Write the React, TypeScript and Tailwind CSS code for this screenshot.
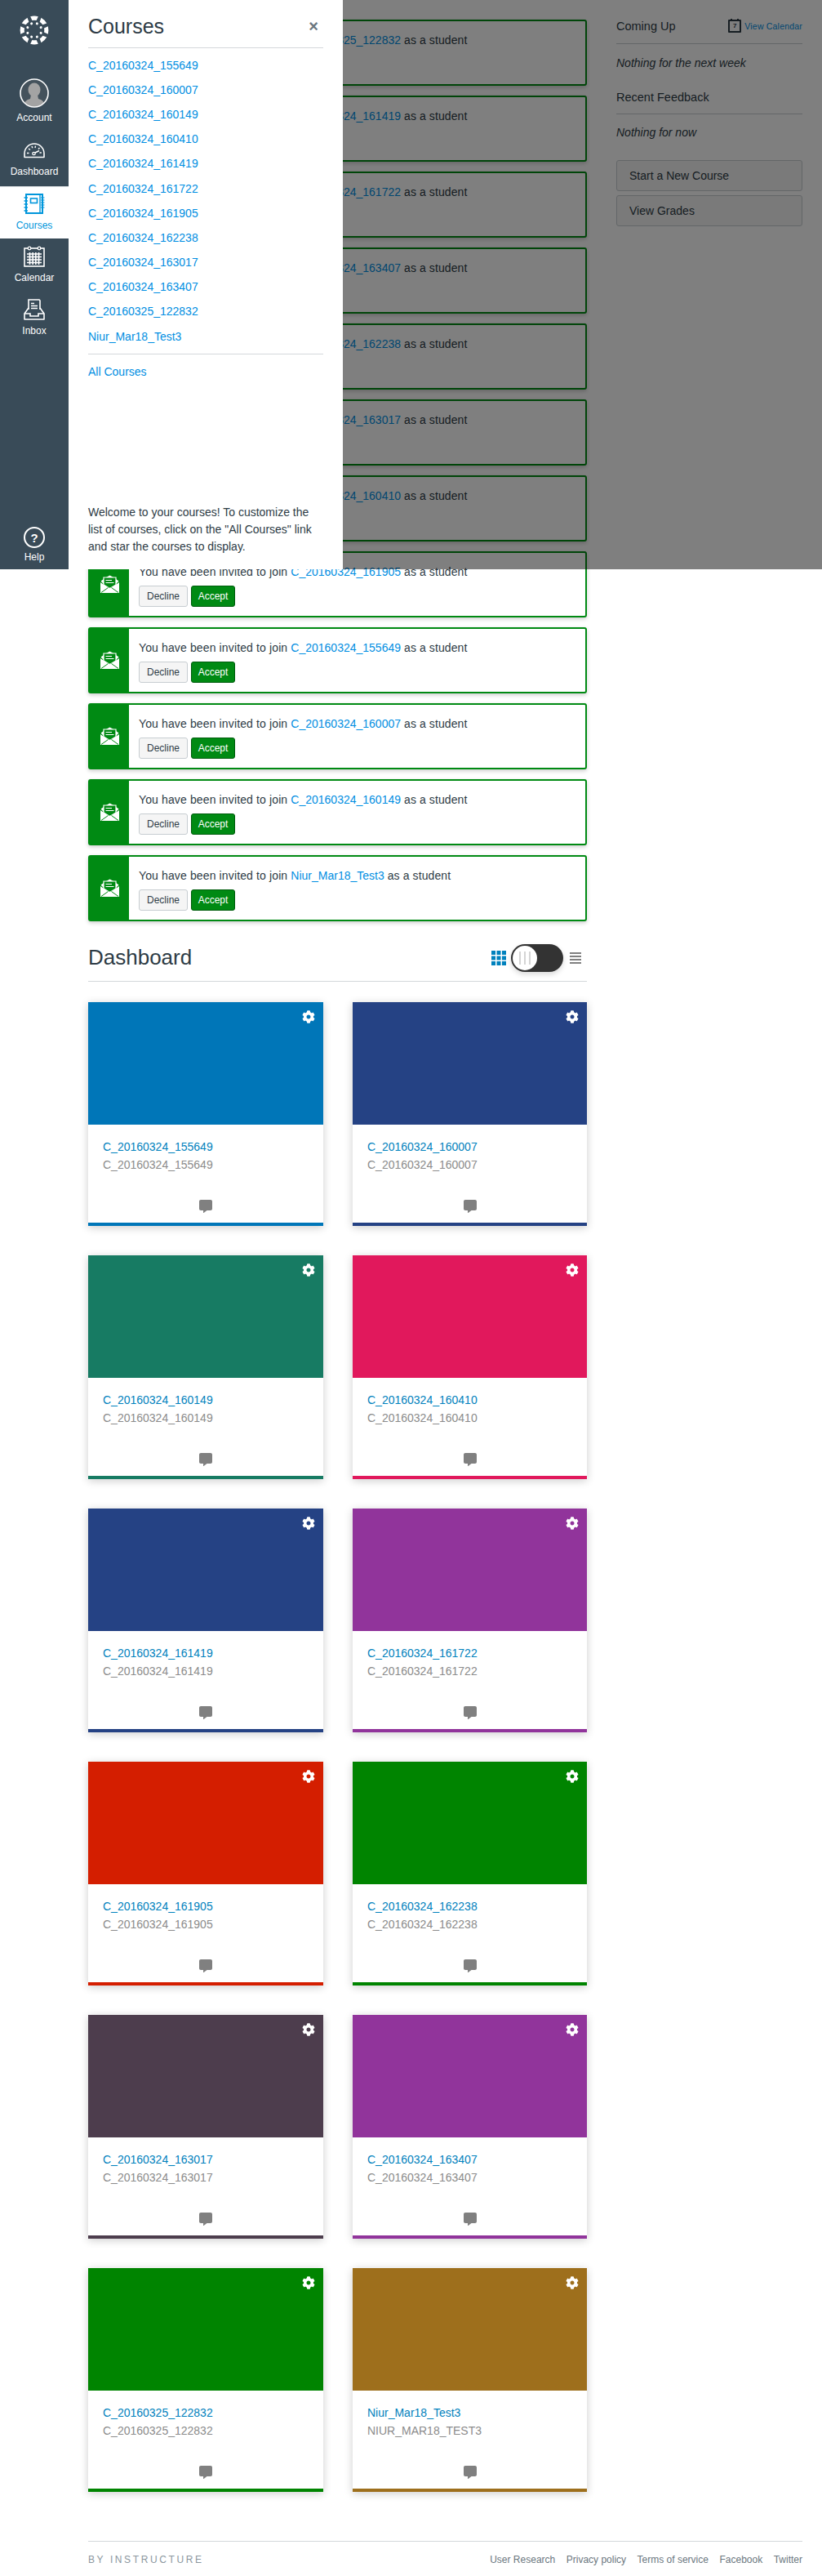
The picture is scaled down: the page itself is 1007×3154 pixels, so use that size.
import React from "react";
import { FaCog, FaCommentAlt } from "react-icons/fa";

const INVITES = [
  "C_20160325_122832", "C_20160324_161419", "C_20160324_161722", "C_20160324_163407",
  "C_20160324_162238", "C_20160324_163017", "C_20160324_160410", "C_20160324_161905",
  "C_20160324_155649", "C_20160324_160007", "C_20160324_160149", "Niur_Mar18_Test3",
];

const TRAY = [
  "C_20160324_155649", "C_20160324_160007", "C_20160324_160149", "C_20160324_160410",
  "C_20160324_161419", "C_20160324_161722", "C_20160324_161905", "C_20160324_162238",
  "C_20160324_163017", "C_20160324_163407", "C_20160325_122832", "Niur_Mar18_Test3",
];

const CARDS: { title: string; sub: string; hero: string; line: string }[] = [
  { title: "C_20160324_155649", sub: "C_20160324_155649", hero: "bg-[#0076b8]", line: "bg-[#0076b8]" },
  { title: "C_20160324_160007", sub: "C_20160324_160007", hero: "bg-[#254284]", line: "bg-[#254284]" },
  { title: "C_20160324_160149", sub: "C_20160324_160149", hero: "bg-[#177b63]", line: "bg-[#177b63]" },
  { title: "C_20160324_160410", sub: "C_20160324_160410", hero: "bg-[#e1185c]", line: "bg-[#e1185c]" },
  { title: "C_20160324_161419", sub: "C_20160324_161419", hero: "bg-[#254284]", line: "bg-[#254284]" },
  { title: "C_20160324_161722", sub: "C_20160324_161722", hero: "bg-[#91349b]", line: "bg-[#91349b]" },
  { title: "C_20160324_161905", sub: "C_20160324_161905", hero: "bg-[#d41e00]", line: "bg-[#d41e00]" },
  { title: "C_20160324_162238", sub: "C_20160324_162238", hero: "bg-[#008400]", line: "bg-[#008400]" },
  { title: "C_20160324_163017", sub: "C_20160324_163017", hero: "bg-[#4d3d4d]", line: "bg-[#4d3d4d]" },
  { title: "C_20160324_163407", sub: "C_20160324_163407", hero: "bg-[#91349b]", line: "bg-[#91349b]" },
  { title: "C_20160325_122832", sub: "C_20160325_122832", hero: "bg-[#008400]", line: "bg-[#008400]" },
  { title: "Niur_Mar18_Test3", sub: "NIUR_MAR18_TEST3", hero: "bg-[#9e6f1c]", line: "bg-[#9e6f1c]" },
];

function Logo() {
  const wedges = [0, 45, 90, 135, 180, 225, 270, 315];
  return (
    <svg width="36" height="36" viewBox="0 0 36 36" fill="#fff">
      {wedges.map((a) => (
        <g key={a} transform={`rotate(${a} 18 18)`}>
          <path d="M13.2 1.2 Q18 0 22.8 1.2 L20.6 6 Q18 5.4 15.4 6 Z" />
          <circle cx="18" cy="9.2" r="1.5" transform="rotate(22.5 18 18)" />
        </g>
      ))}
    </svg>
  );
}

function Avatar() {
  return (
    <svg width="36" height="36" viewBox="0 0 36 36">
      <defs>
        <clipPath id="avatar-clip">
          <circle cx="18" cy="18" r="16.5" />
        </clipPath>
      </defs>
      <circle cx="18" cy="18" r="16.5" fill="#44525c" />
      <g clipPath="url(#avatar-clip)" fill="#a3a3a3">
        <ellipse cx="18" cy="14" rx="7.5" ry="8.5" />
        <path d="M14 20 L22 20 L23 25 Q31 27 33 36 L3 36 Q5 27 13 25 Z" />
      </g>
      <circle cx="18" cy="18" r="17" fill="none" stroke="#fff" strokeWidth="1.6" />
    </svg>
  );
}

function Gauge() {
  return (
    <svg width="26" height="20" viewBox="0 0 26 20" fill="none" stroke="#fff">
      <path d="M1 18.5 V14 A12 12 0 0 1 25 14 V18.5 Z" strokeWidth="1.6" strokeLinejoin="round" />
      <path
        d="M4 13.5 H6.5 M6 8 L8 9.5 M10 5 L10.8 7.2 M14.5 4.6 L14 7 M19.5 7 L18 8.6 M21.8 13 H19.5"
        strokeWidth="1.4"
      />
      <circle cx="12.5" cy="14" r="1.7" strokeWidth="1.3" />
      <path d="M14 13 L19 10.5" strokeWidth="1.5" />
    </svg>
  );
}

function Notebook() {
  return (
    <svg width="26" height="25" viewBox="0 0 26 25" fill="none" stroke="#0096db">
      <rect x="3" y="1" width="20" height="23" strokeWidth="2" />
      <rect x="8.5" y="6" width="8" height="5.5" strokeWidth="1.6" />
      <path d="M20 1 V24" strokeWidth="1.4" />
      <path d="M0.5 5 H5 M0.5 9 H5 M0.5 13 H5 M0.5 17 H5 M0.5 21 H5" strokeWidth="1.4" />
      <path d="M21 5 H25.5 M21 8 H25.5 M21 11 H25.5 M21 14 H25.5 M21 17 H25.5" strokeWidth="1.2" />
    </svg>
  );
}

function CalendarIcon() {
  return (
    <svg width="26" height="26" viewBox="0 0 26 26" fill="none" stroke="#fff">
      <rect x="1" y="3" width="24" height="22" strokeWidth="1.6" />
      <circle cx="7" cy="3" r="1.8" fill="#394b58" strokeWidth="1.3" />
      <circle cx="19" cy="3" r="1.8" fill="#394b58" strokeWidth="1.3" />
      <path
        d="M4 10 H22 M4 13.5 H22 M4 17 H22 M4 20.5 H22 M7.5 8 V23 M11.2 8 V23 M14.8 8 V23 M18.5 8 V23"
        strokeWidth="1.7"
      />
    </svg>
  );
}

function InboxIcon() {
  return (
    <svg width="26" height="26" viewBox="0 0 26 26" fill="none" stroke="#fff" strokeWidth="1.6">
      <path d="M6 13 V1 H19 L20 2 V13" />
      <path d="M9 5.5 H13 M9 8.5 H17 M9 11.5 H17" />
      <path d="M6 11 L1 18 V25 H25 V18 L20 11" strokeLinejoin="round" />
      <path d="M1 18 H8 V21 H18 V18 H25" />
    </svg>
  );
}

function OpenEnvelope() {
  return (
    <svg width="23" height="23" viewBox="0 0 23 23">
      <path d="M6 3.5 L11.5 0.5 L17 3.5 V9 H6 Z" fill="#fff" />
      <path d="M0.5 7.5 L4 5 V11 Z M22.5 7.5 L19 5 V11 Z" fill="#fff" />
      <path d="M4 3 H19 V12 L11.5 16.5 L4 12 Z" fill="#008a13" stroke="#fff" strokeWidth="1.2" />
      <path d="M6.5 6.5 H14 M6.5 9.5 H16.5" stroke="#fff" strokeWidth="1.2" />
      <path d="M0 9 L10 16 H13 L23 9 V22 H0 Z" fill="#fff" />
      <path d="M1 21.5 L9.5 15.5 M22 21.5 L13.5 15.5" stroke="#008a13" strokeWidth="1" />
    </svg>
  );
}

function SmallCalendar() {
  return (
    <div className="relative flex h-[16px] w-[16px] items-center justify-center rounded-[1px] border-2 border-[#2d3b45] text-[8px] font-bold leading-none">
      <span className="absolute -top-[3px] left-[1px] h-[2px] w-[2px] bg-[#2d3b45]" />
      <span className="absolute -top-[3px] right-[1px] h-[2px] w-[2px] bg-[#2d3b45]" />
      7
    </div>
  );
}

function RailItem({
  label,
  icon,
  active,
  className,
}: {
  label: string;
  icon: React.ReactNode;
  active?: boolean;
  className: string;
}) {
  return (
    <div
      className={`flex flex-col items-center ${className} ${
        active ? "bg-white text-[#0096db] border-t border-[#d7dbde]" : "text-white"
      }`}
    >
      <div className="flex items-center justify-center">{icon}</div>
      <div className="text-[12px] leading-[14px]">{label}</div>
    </div>
  );
}

function Invite({ name }: { name: string }) {
  return (
    <div className="flex h-[81px] rounded-[3px] border-2 border-[#008a13] bg-white shadow-[0_2px_5px_rgba(0,0,0,0.2)]">
      <div className="flex w-[48px] shrink-0 items-center justify-center bg-[#008a13]">
        <OpenEnvelope />
      </div>
      <div className="pl-3 pt-[13px]">
        <div className="text-[14px] leading-[21px] text-[#2d3b45]">
          <span className="tracking-[0.13px]">You have been invited to join </span>
          <span className="text-[#008ee2]">{name}</span>
          <span className="tracking-[0.1px]"> as a student</span>
        </div>
        <div className="mt-[6px] flex gap-1">
          <button className="h-[26px] w-[60px] rounded-[3px] border border-[#c7cdd1] bg-[#f5f5f5] text-[12px] text-[#2d3b45]">
            Decline
          </button>
          <button className="h-[26px] w-[54px] rounded-[3px] border border-[#005c0d] bg-[#008a13] text-[12px] text-white">
            Accept
          </button>
        </div>
      </div>
    </div>
  );
}

function Card({ title, sub, hero, line }: { title: string; sub: string; hero: string; line: string }) {
  return (
    <div className="flex h-[274px] flex-col bg-white shadow-[0_2px_10px_rgba(0,0,0,0.2)]">
      <div className={`flex h-[150px] justify-end pr-[10px] pt-[10px] ${hero}`}>
        <FaCog className="text-white" size={16} />
      </div>
      <div className="flex-1 px-[18px] pt-[16px]">
        <div className="text-[14px] leading-[22px] text-[#0081bd]">{title}</div>
        <div className="text-[14px] leading-[22px] text-[#8b8b8b]">{sub}</div>
      </div>
      <div className="flex justify-center pb-[12px]">
        <FaCommentAlt className="text-[#808080]" size={16} />
      </div>
      <div className={`h-1 ${line}`} />
    </div>
  );
}

export default function App() {
  return (
    <div className="relative h-[3154px] w-[1007px] overflow-hidden bg-white font-['Liberation_Sans',Arial,sans-serif] text-[#2d3b45]">
      <div className="flex pl-[108px]">
        <main className="w-[611px] shrink-0 pt-6">
          <div className="flex flex-col gap-3">
            {INVITES.map((n, i) => (
              <Invite key={i} name={n} />
            ))}
          </div>

          <div className="mt-[19px] flex h-[55px] items-center justify-between border-b border-[#d4d8db]">
            <h1 className="pb-[4px] text-[26px] leading-[48px] text-[#2d3b45]">Dashboard</h1>
            <div className="flex items-center pb-[2px] pr-[7px]">
              <svg width="18" height="18" viewBox="0 0 18 18" fill="#0081bd">
                {[0, 6.5, 13].map((y) =>
                  [0, 6.5, 13].map((x) => <rect key={`${x}-${y}`} x={x} y={y} width="5" height="5" />)
                )}
              </svg>
              <div className="relative ml-[6px] h-[34px] w-[64px] rounded-full bg-[#333] shadow-[0_3px_6px_rgba(0,0,0,0.15)]">
                <div className="absolute left-[2px] top-[2px] flex h-[30px] w-[30px] items-center justify-center gap-[4px] rounded-full bg-white">
                  <span className="h-[16px] w-[2px] bg-[#d4d4d4]" />
                  <span className="h-[16px] w-[2px] bg-[#d4d4d4]" />
                  <span className="h-[16px] w-[2px] bg-[#d4d4d4]" />
                </div>
              </div>
              <svg className="ml-2" width="14" height="14" viewBox="0 0 14 14" fill="#808080">
                <rect x="0" y="0" width="14" height="2" />
                <rect x="0" y="4" width="14" height="2" />
                <rect x="0" y="8" width="14" height="2" />
                <rect x="0" y="12" width="14" height="2" />
              </svg>
            </div>
          </div>

          <div className="mt-[25px] grid grid-cols-[288px_287px] gap-x-[36px] gap-y-[36px]">
            {CARDS.map((c, i) => (
              <Card key={i} {...c} />
            ))}
          </div>
        </main>

        <aside className="ml-[36px] w-[228px] shrink-0 pt-[21px] text-[#2d3b45]">
          <div className="flex h-[33px] items-start justify-between border-b border-[#c7cdd1]">
            <div className="text-[14.5px] leading-[22px]">Coming Up</div>
            <div className="flex items-center gap-[4px] pt-[3px]">
              <SmallCalendar />
              <div className="text-[10.5px] leading-[16px] tracking-[0.2px] text-[#008ee2]">View Calendar</div>
            </div>
          </div>
          <div className="mt-[13px] text-[14px] italic leading-[21px]">Nothing for the next week</div>
          <div className="mt-[20px] h-[32px] border-b border-[#c7cdd1] text-[14.5px] leading-[22px]">Recent Feedback</div>
          <div className="mt-[12px] text-[14px] italic leading-[21px]">Nothing for now</div>
          <div className="mt-[23px] flex h-[38px] items-center rounded-[3px] border border-[#c7cdd1] bg-[#f5f5f5] pl-[15px] text-[14px]">
            Start a New Course
          </div>
          <div className="mt-[5px] flex h-[38px] items-center rounded-[3px] border border-[#c7cdd1] bg-[#f5f5f5] pl-[15px] text-[14px]">
            View Grades
          </div>
        </aside>
      </div>

      <footer className="absolute bottom-0 left-[108px] h-[43px] w-[875px] border-t border-[#d4d8db]">
        <div className="flex items-center justify-between pt-[14px]">
          <div className="text-[12px] leading-[16px] tracking-[2.6px] text-[#8b969e]">BY INSTRUCTURE</div>
          <div className="flex gap-[13.5px] text-[12px] leading-[16px] text-[#6b7780]">
            <span>User Research</span>
            <span>Privacy policy</span>
            <span>Terms of service</span>
            <span>Facebook</span>
            <span>Twitter</span>
          </div>
        </div>
      </footer>

      {/* modal navigation tray, dimming the page */}
      <div className="absolute left-0 top-0 h-[697px] w-[1007px] bg-black/50" />
      <nav className="absolute left-0 top-0 flex h-[697px] w-[84px] flex-col bg-[#394b58]">
        <div className="flex h-[96px] justify-center pt-[19px]">
          <Logo />
        </div>
        <RailItem label="Account" icon={<Avatar />} className="h-[67px] gap-[5px]" />
        <RailItem label="Dashboard" icon={<Gauge />} className="h-[65px] gap-[9px] pt-[11px]" />
        <RailItem label="Courses" icon={<Notebook />} active className="h-[64px] gap-[7px] pt-[8px]" />
        <div className="h-px" />
        <RailItem label="Calendar" icon={<CalendarIcon />} className="h-[65px] gap-[6px] pt-[8px]" />
        <RailItem label="Inbox" icon={<InboxIcon />} className="h-[65px] gap-[6px] pt-[8px]" />
        <div className="mt-auto flex flex-col items-center gap-[4px] pb-[8px] text-white">
          <div className="flex h-[26px] w-[26px] items-center justify-center rounded-full border-2 border-white text-[15px] font-bold leading-none">
            ?
          </div>
          <div className="text-[12px] leading-[14px]">Help</div>
        </div>
      </nav>
      <aside className="absolute left-[84px] top-0 flex h-[697px] w-[336px] flex-col bg-white px-6 pb-[17px] pt-[17px]">
        <div className="flex h-[42px] shrink-0 items-start justify-between border-b border-[#d4d8db]">
          <h2 className="text-[25px] leading-[30px] text-[#2d3b45]">Courses</h2>
          <span className="pr-[6px] text-[20px] font-bold leading-[30px] text-[#6b7780]">×</span>
        </div>
        <div className="mt-[6px] flex flex-col">
          {TRAY.map((t) => (
            <div key={t} className="flex h-[30.2px] items-center text-[14px] text-[#008ee2]">
              {t}
            </div>
          ))}
        </div>
        <div className="mt-[6px] border-t border-[#d4d8db] pt-[6px]">
          <div className="flex h-[30px] items-center text-[14px] text-[#008ee2]">All Courses</div>
        </div>
        <p className="mt-auto text-[14px] leading-[21px] text-[#2d3b45]">
          Welcome to your courses! To customize the list of courses, click on the "All Courses" link and star the courses to display.
        </p>
      </aside>
    </div>
  );
}
